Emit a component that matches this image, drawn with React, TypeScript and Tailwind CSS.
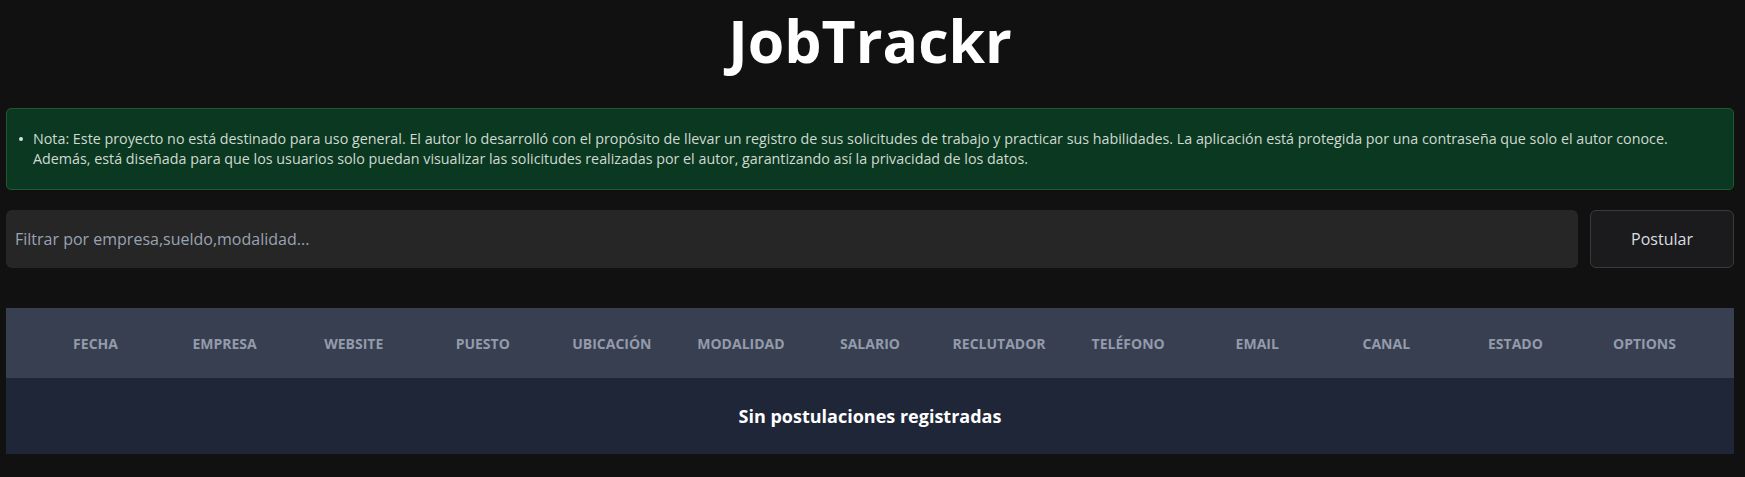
import React from "react";

const headers = [
  "Fecha",
  "Empresa",
  "Website",
  "Puesto",
  "Ubicación",
  "Modalidad",
  "Salario",
  "Reclutador",
  "Teléfono",
  "Email",
  "Canal",
  "Estado",
  "Options",
];

export default function App() {
  return (
    <div className="min-h-[477px] bg-[#111111] font-['Open_Sans',sans-serif] pl-[6px] pr-[11px]">
      <h1 className="pt-[11px] text-center text-[59px] leading-[59px] font-bold text-white">
        JobTrackr
      </h1>

      <div className="mt-[38px] rounded-[5px] border border-[#1d5a33] bg-[#0b3820] py-5 pl-[12px] pr-5">
        <div className="flex items-start gap-[10px]">
          <span className="mt-[8px] block h-[4px] w-[4px] shrink-0 rounded-full bg-[#d8e2db]" />
          <p className="text-[14.3px] leading-[20px] text-[#cfdad2]">
            Nota: Este proyecto no está destinado para uso general. El autor lo desarrolló con el propósito de llevar un
            registro de sus solicitudes de trabajo y practicar sus habilidades. La aplicación está protegida por una
            contraseña que solo el autor conoce. Además, está diseñada para que los usuarios solo puedan visualizar las
            solicitudes realizadas por el autor, garantizando así la privacidad de los datos.
          </p>
        </div>
      </div>

      <div className="mt-[20px] flex gap-3">
        <input
          type="text"
          placeholder="Filtrar por empresa,sueldo,modalidad..."
          className="h-[58px] flex-1 rounded-[6px] bg-[#262626] px-[9px] text-[16px] text-gray-200 outline-none placeholder:text-[#9aa3b2]"
        />
        <button className="h-[58px] w-[144px] rounded-[6px] border border-[#3a3a3d] bg-[#1b1b1d] text-[16px] text-[#dcdde0]">
          Postular
        </button>
      </div>

      <div className="mt-[40px] bg-[#1f2637]">
        <div className="grid h-[70px] grid-cols-13 items-center bg-[#383f51] px-[25px]">
          {headers.map((h) => (
            <div key={h} className="text-center text-[14px] font-bold uppercase text-[#939bab]">
              {h}
            </div>
          ))}
        </div>
        <div className="flex h-[76px] items-center justify-center">
          <span className="text-[18px] font-bold text-white">Sin postulaciones registradas</span>
        </div>
      </div>
    </div>
  );
}
